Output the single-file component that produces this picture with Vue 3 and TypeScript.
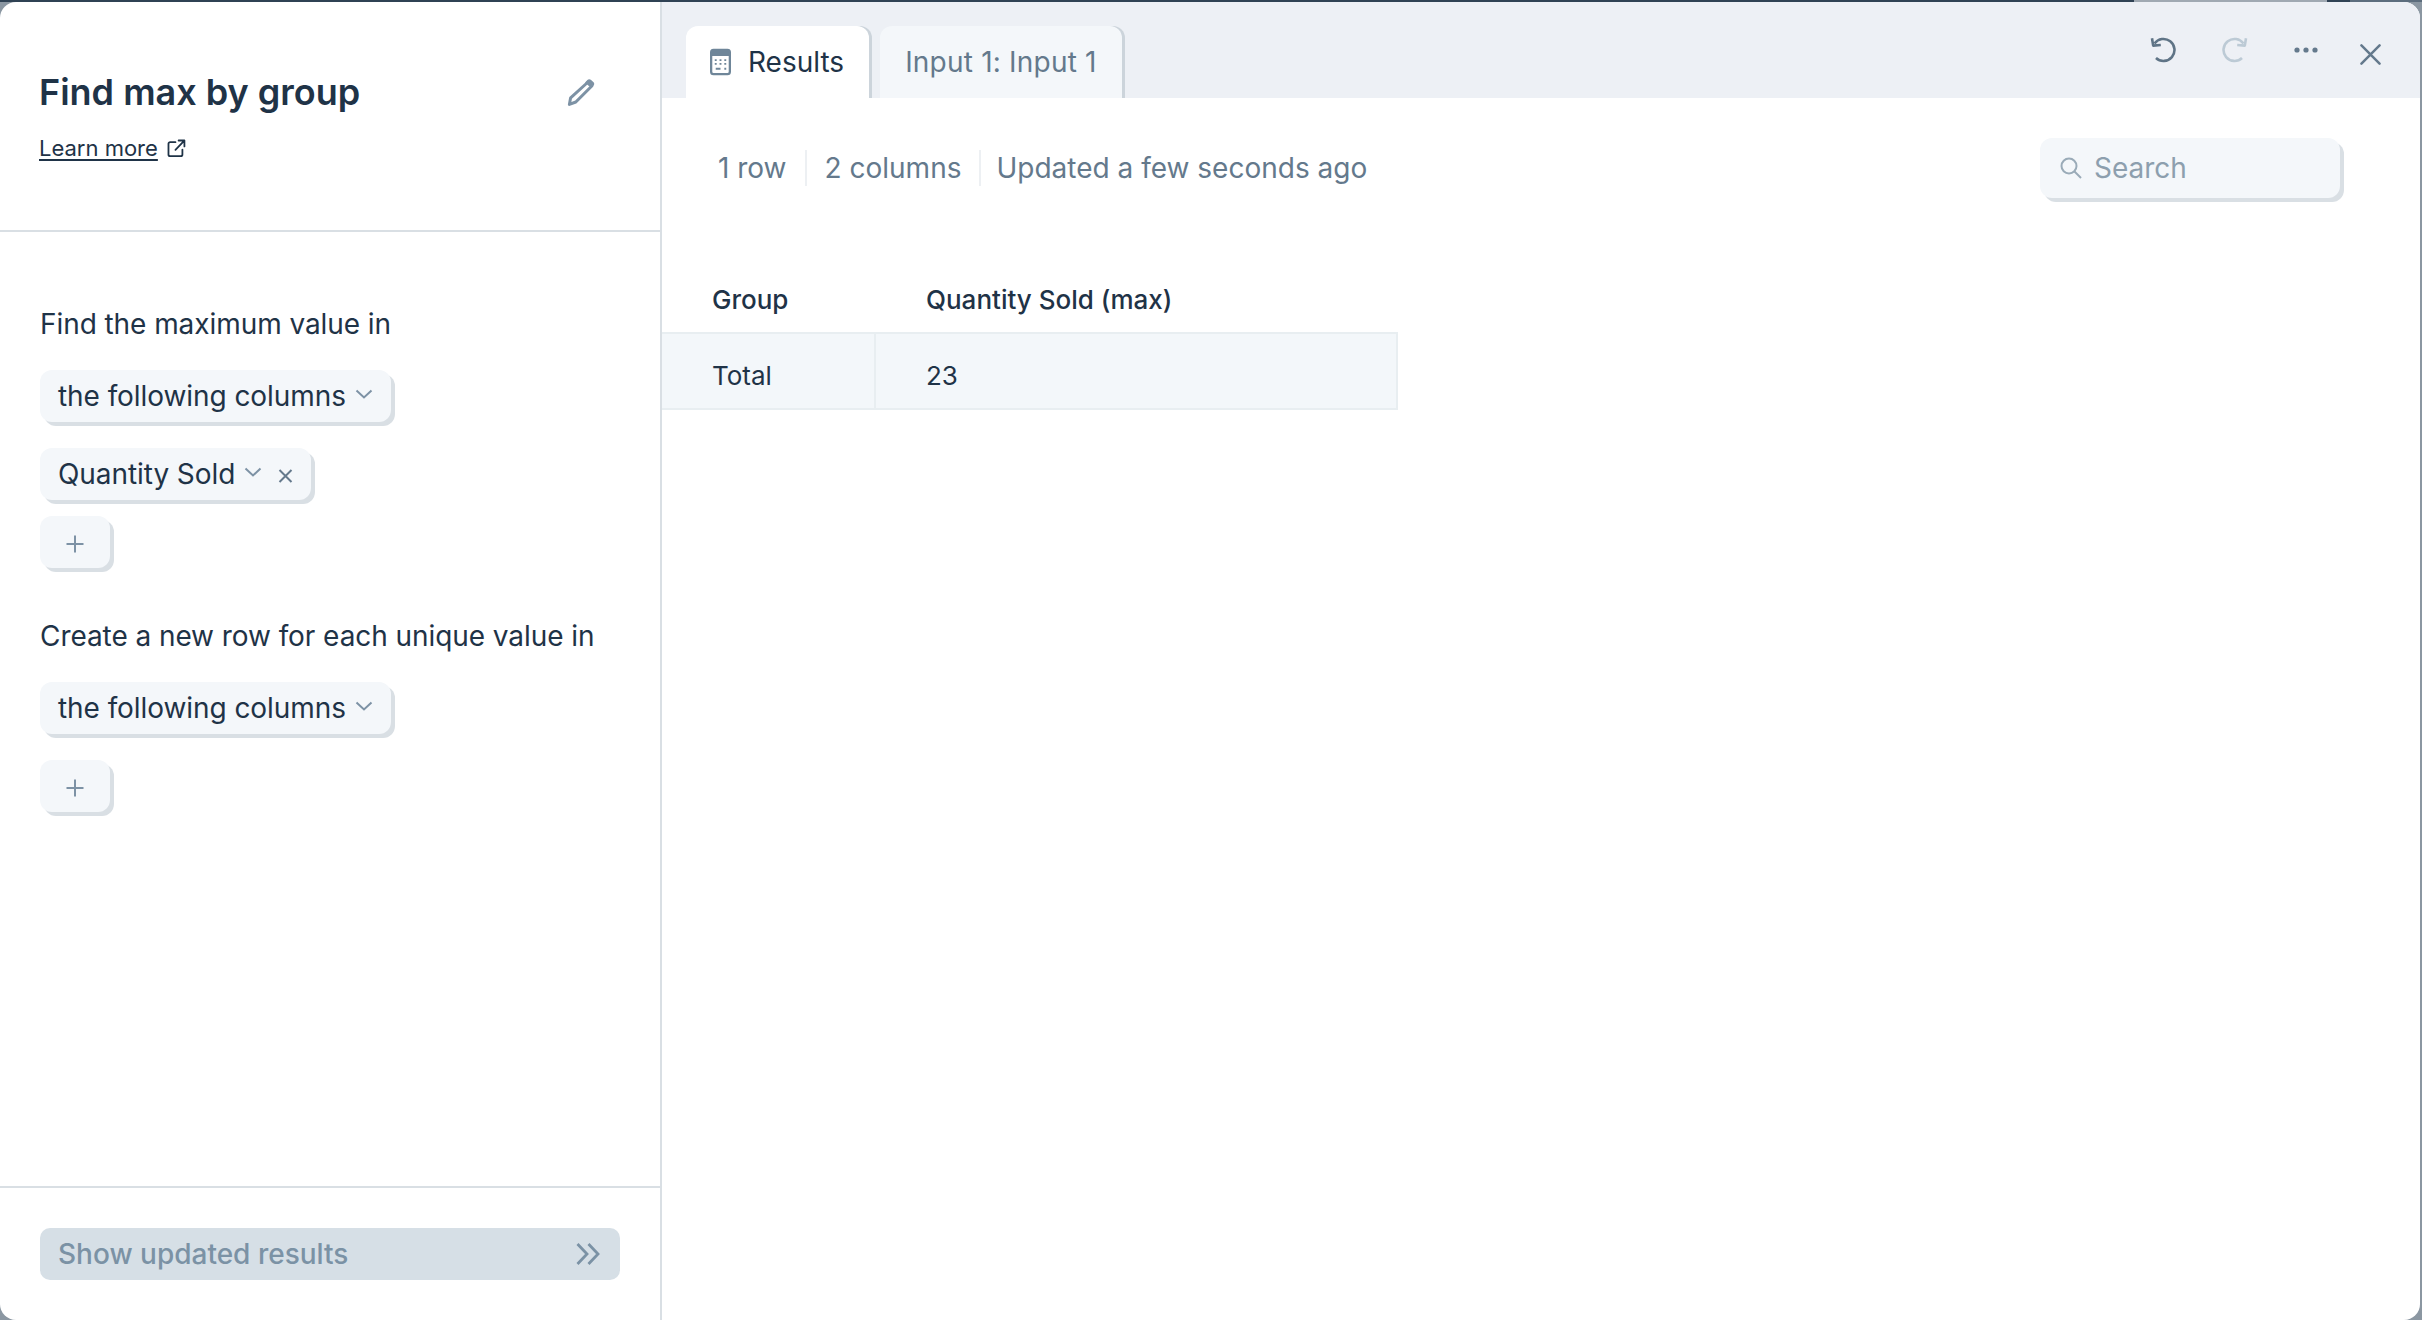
<script setup lang="ts">
const stats: string[] = ['1 row', '2 columns', 'Updated a few seconds ago']
</script>

<template>
  <div class="page">
    <div class="strip">
      <span class="strip-dark"></span>
      <span class="strip-light"></span>
      <span class="strip-dark short"></span>
      <span class="strip-mid"></span>
    </div>
    <div class="modal">
      <aside class="side">
        <header class="side-head">
          <div class="title-row">
            <h1>Find max by group</h1>
            <svg class="pencil" viewBox="0 0 28 28" width="28" height="28">
              <path d="M20.5 4.5 24.8 8 8.8 24 2.4 26.4 3.6 19.8Z" fill="none" stroke="#7d92a5" stroke-width="3" stroke-linejoin="round"/>
              <path d="M20.4 2c1-1 2.3-1.1 3.4-.2l2.5 2.1c1.2 1 1.2 2.5.3 3.5l-2.3 2.5-6.2-5.4Z" fill="#7d92a5"/>
            </svg>
          </div>
          <div class="learn">
            <a>Learn more</a>
            <svg viewBox="0 0 18 18" width="19" height="19" fill="none" stroke="#1f3347" stroke-width="1.7" stroke-linecap="round" stroke-linejoin="round">
              <path d="M8 3H3a1.6 1.6 0 0 0-1.6 1.6v10A1.6 1.6 0 0 0 3 16.2h10a1.6 1.6 0 0 0 1.6-1.6V10"/>
              <path d="M8 10.2 16.4 1.6M11 1.4h5.5V7"/>
            </svg>
          </div>
        </header>
        <section class="side-body">
          <p class="label first">Find the maximum value in</p>
          <div class="chip">
            <span>the following columns</span>
            <svg class="chev" viewBox="0 0 18 10" width="18" height="10"><path d="M1.5 1.5 9 8.5l7.5-7" fill="none" stroke="#7d92a5" stroke-width="2"/></svg>
          </div>
          <div class="chip">
            <span>Quantity Sold</span>
            <svg class="chev" viewBox="0 0 18 10" width="18" height="10"><path d="M1.5 1.5 9 8.5l7.5-7" fill="none" stroke="#7d92a5" stroke-width="2"/></svg>
            <svg class="cross" viewBox="0 0 15 14" width="15" height="14"><path d="M1.5 1 13.5 13M13.5 1 1.5 13" fill="none" stroke="#64798c" stroke-width="2"/></svg>
          </div>
          <button class="plus" type="button">
            <svg viewBox="0 0 20 20" width="20" height="20"><path d="M10 1.5v17M1.5 10h17" fill="none" stroke="#7d92a5" stroke-width="2"/></svg>
          </button>
          <p class="label">Create a new row for each unique value in</p>
          <div class="chip">
            <span>the following columns</span>
            <svg class="chev" viewBox="0 0 18 10" width="18" height="10"><path d="M1.5 1.5 9 8.5l7.5-7" fill="none" stroke="#7d92a5" stroke-width="2"/></svg>
          </div>
          <button class="plus spaced" type="button">
            <svg viewBox="0 0 20 20" width="20" height="20"><path d="M10 1.5v17M1.5 10h17" fill="none" stroke="#7d92a5" stroke-width="2"/></svg>
          </button>
        </section>
        <footer class="side-foot">
          <button class="run" type="button">
            <span>Show updated results</span>
            <svg viewBox="0 0 24 22" width="24" height="22" fill="none" stroke="#7b92a5" stroke-width="2.8"><path d="M1.5 1 11 11 1.5 21M12.5 1 22 11l-9.5 10"/></svg>
          </button>
        </footer>
      </aside>
      <main class="main">
        <div class="tabs">
          <div class="tab active">
            <svg viewBox="0 0 22 28" width="21" height="28">
              <rect x="1.2" y="1.2" width="19.6" height="25.6" rx="2.5" fill="none" stroke="#6f8699" stroke-width="2.4"/>
              <rect x="1.2" y="1.2" width="19.6" height="6.5" fill="#6f8699"/>
              <path d="M5 12h2M10 12h2M15 12h2M5 16h2M10 16h2M15 16h2M6 21h5M15 21h2" stroke="#6f8699" stroke-width="2" fill="none"/>
            </svg>
            <span>Results</span>
          </div>
          <div class="tab plain">Input 1: Input 1</div>
          <div class="tools">
            <svg class="undo" viewBox="0 0 26 26" width="26" height="26" fill="none" stroke="#5f7486" stroke-width="2.6">
              <path d="M4.5 6.6A11 11 0 1 1 6 21"/>
              <path d="M2 1.2 3.2 8.6l7.6-.6" stroke-linejoin="round"/>
            </svg>
            <svg class="redo" viewBox="0 0 26 26" width="26" height="26" fill="none" stroke="#bccad5" stroke-width="2.6">
              <path d="M21.5 6.6A11 11 0 1 0 20 21"/>
              <path d="M24 1.2 22.8 8.6 15.2 8" stroke-linejoin="round"/>
            </svg>
            <svg class="dots" viewBox="0 0 24 6" width="24" height="6" fill="#64798c">
              <circle cx="3" cy="3" r="2.6"/><circle cx="12" cy="3" r="2.6"/><circle cx="21" cy="3" r="2.6"/>
            </svg>
            <svg class="close" viewBox="0 0 22 22" width="21" height="21"><path d="M1.5 1.5 20.5 20.5M20.5 1.5 1.5 20.5" fill="none" stroke="#64798c" stroke-width="2.6" stroke-linecap="round"/></svg>
          </div>
        </div>
        <div class="meta">
          <div class="stats">
            <span v-for="s in stats" :key="s" class="stat">{{ s }}</span>
          </div>
          <div class="search">
            <svg viewBox="0 0 22 22" width="22" height="22" fill="none" stroke="#9aabb8" stroke-width="2"><circle cx="9" cy="9" r="7.5"/><path d="M14.5 14.5 21 21"/></svg>
            <span>Search</span>
          </div>
        </div>
        <div class="grid">
          <div class="th">Group</div>
          <div class="th second">Quantity Sold (max)</div>
          <div class="td">Total</div>
          <div class="td">23</div>
        </div>
      </main>
    </div>
  </div>
</template>

<style scoped>
.page {
  width: 2422px;
  height: 1320px;
  overflow: hidden;
  background: #8b97a2;
  font-family: Inter, "Liberation Sans", sans-serif;
  color: #1f3347;
  display: flex;
  flex-direction: column;
}
.strip { display: flex; height: 2px; flex: none; }
.strip-dark { flex: 0 0 2134px; background: #2f4254; }
.strip-light { flex: 0 0 193px; background: #a0a9b2; }
.strip-dark.short { flex: 0 0 23px; }
.strip-mid { flex: 1; background: #5c6d7d; }
.modal {
  flex: 1;
  margin-right: 2px;
  min-height: 0;
  display: flex;
  background: #fff;
  border-radius: 16px;
  overflow: hidden;
}
.side {
  flex: 0 0 660px;
  display: flex;
  flex-direction: column;
  border-right: 2px solid #d9dfe4;
  box-sizing: content-box;
}
.side-head {
  height: 230px;
  box-sizing: border-box;
  padding: 68px 40px 0;
  border-bottom: 2px solid #d9dfe4;
}
.title-row { display: flex; align-items: center; justify-content: space-between; padding-right: 25px; margin-left: -1px; }
h1 { margin: 0; font-size: 36px; line-height: 44px; font-weight: 600; letter-spacing: 0; }
.learn { display: flex; align-items: center; gap: 9px; margin-top: 20px; font-size: 22px; line-height: 28px; margin-left: -1px; }
.learn a { text-decoration: underline; text-underline-offset: 3px; }
.side-body { display: flex; flex-direction: column; align-items: flex-start; padding: 72px 40px 0; }
.label { margin: 48px 0 0; font-size: 28px; line-height: 40px; letter-spacing: -0.07px; }
.label.first { margin-top: 0; }
.chip {
  margin-top: 26px;
  height: 52px;
  display: flex;
  align-items: center;
  padding: 0 18px;
  background: #f4f7fa;
  border-radius: 12px;
  box-shadow: 4px 4px 0 #d9dfe4;
  font-size: 28px;
  letter-spacing: -0.07px;
}
.chev { margin-left: 9px; margin-top: -4px; }
.cross { margin-left: 16px; margin-top: 4px; }
.plus {
  margin-top: 16px;
  width: 70px;
  height: 52px;
  border: 0;
  padding: 3px 0 0;
  display: flex;
  align-items: center;
  justify-content: center;
  background: #f4f7fa;
  border-radius: 12px;
  box-shadow: 4px 4px 0 #d9dfe4;
}
.plus.spaced { margin-top: 26px; }
.side-foot { margin-top: auto; height: 134px; box-sizing: border-box; border-top: 2px solid #d9dfe4; padding: 40px 40px 0; }
.run {
  width: 100%;
  height: 52px;
  border: 0;
  border-radius: 10px;
  background: #d6dfe6;
  color: #7b92a5;
  display: flex;
  align-items: center;
  justify-content: space-between;
  padding: 0 20px 0 18px;
  font: 500 28px Inter, "Liberation Sans", sans-serif;
}
.main { flex: 1; min-width: 0; display: flex; flex-direction: column; }
.tabs { height: 96px; flex: none; background: #edf0f5; display: flex; align-items: flex-end; gap: 11px; padding: 0 39px 0 24px; }
.tab {
  height: 72px;
  box-sizing: border-box;
  padding: 0 25px 0 24px;
  display: flex;
  align-items: center;
  gap: 17px;
  background: #f4f7fa;
  border-radius: 12px 12px 0 0;
  box-shadow: 3px 0 0 #ccd4db;
  font-size: 28px;
  color: #64798c;
}
.tab.plain { letter-spacing: 0.2px; padding-left: 25px; }
.tab.active { background: #fff; color: #1f3347; }
.tools { margin-left: auto; align-self: stretch; display: flex; align-items: flex-start; flex: 1; justify-content: flex-end; }
.undo { margin-top: 35px; }
.redo { margin: 35px 0 0 46px; }
.dots { margin: 45px 0 0 46px; }
.close { margin: 42px 0 0 42px; }
.meta { display: flex; align-items: center; justify-content: space-between; margin-top: 40px; padding: 0 80px 0 56px; height: 60px; }
.stats { display: flex; align-items: center; }
.stat { font-size: 28px; line-height: 36px; color: #64798c; padding: 0 18px; border-left: 2px solid #edf0f3; }
.stat:first-child { padding-left: 0; border-left: 0; }
.stat:last-child { padding-left: 15px; }
.search {
  width: 300px;
  height: 60px;
  box-sizing: border-box;
  padding-left: 20px;
  display: flex;
  align-items: center;
  gap: 12px;
  background: #f4f7fa;
  border-radius: 12px;
  box-shadow: 4px 4px 0 #d9dfe4;
  font-size: 28px;
  color: #8d9fae;
}
.grid { display: grid; grid-template-columns: 212px 524px; margin-top: 70px; }
.th { height: 64px; padding-left: 50px; font-size: 26px; line-height: 64px; font-weight: 500; box-sizing: border-box; }
.th.second { padding-left: 52px; }
.td { height: 78px; box-sizing: border-box; padding: 22px 0 0 50px; font-size: 26px; line-height: 40px; background: #f3f7fa; border-top: 2px solid #e8eef1; border-bottom: 2px solid #e8eef1; }
.td:last-child { border-left: 2px solid #e8eef1; border-right: 2px solid #e8eef1; }
</style>

<style>
html, body { margin: 0; overflow: hidden; }
</style>
